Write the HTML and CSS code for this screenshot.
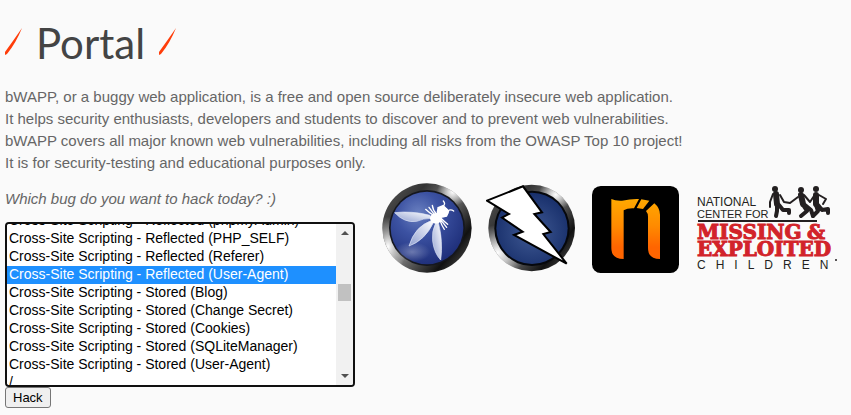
FILE: index.html
```
<!DOCTYPE html>
<html lang="en">
<head>
  <meta charset="UTF-8" />
  <title>bWAPP - Portal</title>
  <link rel="stylesheet" href="styles.css">
</head>
<body>

  <div id="main">
    <h1>
      <svg class="slash" viewBox="0 0 17 27" aria-hidden="true"><path d="M17 0 Q11 15 2 26 L0 27 L0 24 Q8 13 17 0Z" /></svg>
      <span>Portal</span>
      <svg class="slash" viewBox="0 0 17 27" aria-hidden="true"><path d="M17 0 Q11 15 2 26 L0 27 L0 24 Q8 13 17 0Z" /></svg>
    </h1>

    <p class="intro">
      bWAPP, or a buggy web application, is a free and open source deliberately insecure web application.<br>
      It helps security enthusiasts, developers and students to discover and to prevent web vulnerabilities.<br>
      bWAPP covers all major known web vulnerabilities, including all risks from the OWASP Top 10 project!<br>
      It is for security-testing and educational purposes only.
    </p>

    <div class="row">
      <form class="bugs" onsubmit="return false">
        <label for="bug">Which bug do you want to hack today? :)</label>
        <div class="list">
          <select id="bug" name="bug" size="9">
            <option>/ A2 - Broken Auth. &amp; Session Mgmt. /</option>
            <option>Broken Authentication - CAPTCHA Bypassing</option>
            <option>Broken Authentication - Forgotten Function</option>
            <option>Broken Authentication - Insecure Login Forms</option>
            <option>Broken Authentication - Logout Management</option>
            <option>Broken Authentication - Password Attacks</option>
            <option>Broken Authentication - Weak Passwords</option>
            <option>Session Management - Administrative Portals</option>
            <option>Session Management - Cookies (HTTPOnly)</option>
            <option>Session Management - Cookies (Secure)</option>
            <option>Session Management - Session ID in URL</option>
            <option>Session Management - Strong Sessions</option>
            <option>/ A3 - Cross-Site Scripting (XSS) /</option>
            <option>Cross-Site Scripting - Reflected (GET)</option>
            <option>Cross-Site Scripting - Reflected (POST)</option>
            <option>Cross-Site Scripting - Reflected (JSON)</option>
            <option>Cross-Site Scripting - Reflected (AJAX/JSON)</option>
            <option>Cross-Site Scripting - Reflected (AJAX/XML)</option>
            <option>Cross-Site Scripting - Reflected (Back Button)</option>
            <option>Cross-Site Scripting - Reflected (Custom Header)</option>
            <option>Cross-Site Scripting - Reflected (Eval)</option>
            <option>Cross-Site Scripting - Reflected (HREF)</option>
            <option>Cross-Site Scripting - Reflected (phpMyAdmin)</option>
            <option>Cross-Site Scripting - Reflected (PHP_SELF)</option>
            <option>Cross-Site Scripting - Reflected (Referer)</option>
            <option selected>Cross-Site Scripting - Reflected (User-Agent)</option>
            <option>Cross-Site Scripting - Stored (Blog)</option>
            <option>Cross-Site Scripting - Stored (Change Secret)</option>
            <option>Cross-Site Scripting - Stored (Cookies)</option>
            <option>Cross-Site Scripting - Stored (SQLiteManager)</option>
            <option>Cross-Site Scripting - Stored (User-Agent)</option>
            <option>/</option>
            <option>Insecure DOR (Change Secret)</option>
            <option>Insecure DOR (Reset Secret)</option>
            <option>Insecure DOR (Order Tickets)</option>
            <option>/ A5 - Security Misconfiguration /</option>
            <option>Arbitrary File Access (Samba)</option>
            <option>Cross-Domain Policy File (Flash)</option>
            <option>Cross-Origin Resource Sharing (AJAX)</option>
            <option>Cross-Site Tracing (XST)</option>
            <option>Denial-of-Service (Large Chunk Size)</option>
            <option>Denial-of-Service (Slow HTTP DoS)</option>
            <option>Denial-of-Service (SSL-Exhaustion)</option>
            <option>Denial-of-Service (XML Bomb)</option>
            <option>Insecure FTP Configuration</option>
            <option>Insecure SNMP Configuration</option>
            <option>Insecure WebDAV Configuration</option>
            <option>Local Privilege Escalation (sendpage)</option>
            <option>Local Privilege Escalation (udev)</option>
            <option>Man-in-the-Middle Attack (HTTP)</option>
            <option>Man-in-the-Middle Attack (SMTP)</option>
            <option>Old/Backup &amp; Unreferenced Files</option>
            <option>Robots File</option>
            <option>/ A6 - Sensitive Data Exposure /</option>
            <option>Base64 Encoding (Secret)</option>
            <option>BEAST/CRIME/BREACH Attacks</option>
            <option>Clear Text HTTP (Credentials)</option>
            <option>Heartbleed Vulnerability</option>
            <option>Host Header Attack (Reset Poisoning)</option>
            <option>HTML5 Web Storage (Secret)</option>
            <option>POODLE Vulnerability</option>
            <option>SSL 2.0 Deprecated Protocol</option>
            <option>Text Files (Accounts)</option>
            <option>/ A7 - Missing Functional Level Access Control /</option>
            <option>Directory Traversal - Directories</option>
            <option>Directory Traversal - Files</option>
            <option>Server Side Request Forgery (SSRF)</option>
          </select>
          <div class="scrollbar" aria-hidden="true">
            <svg viewBox="0 0 17 17"><path d="M5 11 L9 7 L13 11Z" /></svg>
            <div class="track" id="track"><div class="thumb" id="thumb"></div></div>
            <svg viewBox="0 0 17 17"><path d="M5 6 L9 10 L13 6Z" /></svg>
          </div>
        </div>
        <button type="submit">Hack</button>
      </form>

      <div class="sponsors">
        <!-- OWASP -->
        <a href="#owasp" aria-label="OWASP">
          <svg class="logo" viewBox="22 15 270 270">
            <defs>
              <linearGradient id="rim" x1="0" y1="0.1" x2="1" y2="0.9">
                <stop offset="0" stop-color="#555" />
                <stop offset="0.25" stop-color="#333" />
                <stop offset="0.5" stop-color="#777" />
                <stop offset="0.8" stop-color="#111" />
                <stop offset="1" stop-color="#555" />
              </linearGradient>
              <radialGradient id="shineA"><stop offset="0" stop-color="#fff" /><stop offset="1" stop-color="#fff" stop-opacity="0" /></radialGradient>
              <radialGradient id="ball" cx="0.38" cy="0.3" r="0.75">
                <stop offset="0" stop-color="#6a80c0" />
                <stop offset="0.4" stop-color="#3c52a2" />
                <stop offset="1" stop-color="#1d2d78" />
              </radialGradient>
              <linearGradient id="wing" x1="0" y1="1" x2="1" y2="0">
                <stop offset="0" stop-color="#8f9fd0" />
                <stop offset="1" stop-color="#fff" />
              </linearGradient>
              <clipPath id="disc"><circle cx="157" cy="150" r="134" /></clipPath>
            </defs>
            <circle cx="157" cy="150" r="134" fill="url(#rim)" />
            <g clip-path="url(#disc)">
              <ellipse cx="234" cy="42" rx="48" ry="42" fill="url(#shineA)" />
              <ellipse cx="40" cy="206" rx="55" ry="90" fill="url(#shineA)" />
            </g>
            <circle cx="157" cy="150" r="114" fill="#15171f" />
            <circle cx="157" cy="150" r="109" fill="url(#ball)" />
            <ellipse cx="112" cy="222" rx="55" ry="30" fill="url(#shineA)" opacity="0.3" />
            <g fill="url(#wing)" stroke="#dfe5f6" stroke-width="2">
              <path d="M60 104 Q110 98 166 112 L170 121 Q145 121 126 130 Q90 136 60 104Z" />
              <path d="M172 127 Q120 145 103 204 Q151 187 176 134Z" />
              <path d="M184 133 Q170 160 174 190 Q179 226 198 246 Q206 190 191 133Z" />
            </g>
            <g fill="#fff">
              <ellipse cx="184" cy="121" rx="18" ry="16" />
              <ellipse cx="204" cy="102" rx="18" ry="16" />
              <path d="M188 88 L206 80 L224 99 L217 116 L201 119 L187 108Z" />
            </g>
            <g fill="none" stroke="#fff" stroke-width="4" stroke-linecap="round">
              <path d="M205 85 Q214 78 206 69 M219 99 Q228 92 237 99" />
              <path d="M178 112 Q168 108 153 94 M179 109 L163 88 M185 107 Q175 98 173 82" />
              <path d="M195 124 Q201 143 209 154 M197 124 L216 148 M199 121 Q210 132 219 139" />
            </g>
          </svg>
        </a>

        <!-- OWASP ZAP -->
        <a href="#zap" aria-label="OWASP Zed Attack Proxy">
          <svg class="logo" viewBox="15 15 270 270">
            <defs>
              <radialGradient id="zball" cx="0.5" cy="0.55" r="0.6">
                <stop offset="0" stop-color="#405a94" />
                <stop offset="1" stop-color="#152c68" />
              </radialGradient>
              <clipPath id="zdisc"><circle cx="152" cy="150" r="130" /></clipPath>
            </defs>
            <circle cx="152" cy="150" r="130" fill="url(#rim)" />
            <g clip-path="url(#zdisc)">
              <ellipse cx="224" cy="50" rx="52" ry="46" fill="url(#shineA)" />
              <ellipse cx="50" cy="224" rx="80" ry="84" fill="url(#shineA)" />
            </g>
            <circle cx="153" cy="151" r="113" fill="#05070c" />
            <circle cx="153" cy="151" r="107" fill="url(#zball)" />
            <path d="M18 68 L126 25 L183 103 L160 108 L209 162 L187 168 L257 257 L99 171 L125 161 L63 119 L84 108Z" fill="#fff" stroke="#000" stroke-width="6" />
          </svg>
        </a>

        <!-- Netsparker -->
        <a href="#netsparker" aria-label="Netsparker">
          <svg class="logo" viewBox="15 15 270 270">
            <defs>
              <linearGradient id="flame" gradientUnits="userSpaceOnUse" x1="0" y1="65" x2="0" y2="243">
                <stop offset="0" stop-color="#ffa800" />
                <stop offset="0.45" stop-color="#ff8a00" />
                <stop offset="0.8" stop-color="#ff6500" />
                <stop offset="1" stop-color="#ff6500" />
              </linearGradient>
            </defs>
            <rect x="21" y="24" width="261" height="261" rx="26" />
            <g fill="url(#flame)">
              <path d="M79 63 Q91 69 111 68 Q138 62 162 63 L147 91 Q127 90 116 97 L116 243 Q79 243 79 210Z" />
              <path d="M169 64 L193 68 L174 93 L155 90Z" />
              <path d="M208 76 Q225 90 225 110 L225 243 Q189 243 189 210 L189 116 Q189 106 183 99Z" />
            </g>
          </svg>
        </a>

        <!-- National Center for Missing & Exploited Children -->
        <a href="#ncmec" aria-label="National Center for Missing and Exploited Children">
          <svg class="ncmec" viewBox="-3 0 156 90">
            <g class="sans">
              <text x="0" y="23" font-size="12">NATIONAL</text>
              <text x="0" y="35" font-size="11">CENTER FOR</text>
              <text class="tracked" x="0" y="86" font-size="12">CHILDREN</text>
            </g>
            <rect x="1" y="37" width="119" height="2" fill="#231f20" />
            <g class="slab">
              <text x="0" y="56" font-size="20">MISSING</text>
              <text x="110" y="56" font-size="20">&amp;</text>
              <text x="0" y="73" font-size="20">EXPLOITED</text>
            </g>
            <circle cx="139" cy="77" r="1" fill="#231f20" />
            <g fill="#231f20">
              <circle cx="78" cy="6" r="3" />
              <circle cx="104" cy="7" r="3" />
              <circle cx="119" cy="6" r="3" />
            </g>
            <g fill="none" stroke="#231f20" stroke-linejoin="round" stroke-linecap="round">
              <path d="M79 11 L80 21" stroke-width="6" />
              <path d="M76 11 L73 19 L73 24 M83 12 L87 19 L93 20 L101 14" stroke-width="2" />
              <path d="M80 22 L80 28 L79 33 M82 22 L86 27 L92 27 L92 30" stroke-width="4" />
              <path d="M104 12 L106 21" stroke-width="6" />
              <path d="M107 12 L113 19 L117 13" stroke-width="2" />
              <path d="M106 22 L110 28 L104 33 M108 22 L114 27 L116 33" stroke-width="4" />
              <path d="M119 12 L119 21" stroke-width="6" />
              <path d="M122 12 L129 16 L126 21" stroke-width="2" />
              <path d="M119 22 L121 28 L116 33 M121 22 L125 27 L131 26 L131 30" stroke-width="4" />
            </g>
          </svg>
        </a>
      </div>
    </div>
  </div>

  <script>
    const bug = document.getElementById('bug');
    const track = document.getElementById('track');
    const thumb = document.getElementById('thumb');

    function moveThumb() {
      const ratio = bug.scrollTop / (bug.scrollHeight - bug.clientHeight);
      thumb.style.marginTop = Math.round(ratio * (track.clientHeight - thumb.offsetHeight)) + 'px';
    }

    // open the list a few bugs above the selected one
    const selected = bug.options[bug.selectedIndex];
    bug.scrollTop = selected.offsetHeight * (bug.selectedIndex - 3) + 12;
    bug.addEventListener('scroll', moveThumb);
    moveThumb();
  </script>

</body>
</html>
```
FILE: styles.css
```
body {
  margin: 0;
  background-color: #fafafa;
  font-family: Arial, "Liberation Sans", sans-serif;
  font-size: 15px;
  line-height: 22px;
  color: #666;
}

#main {
  padding: 20px 5px 8px;
}

h1 {
  display: flex;
  align-items: flex-start;
  gap: 14px;
  margin: 0 0 20px;
  font-family: Lato, sans-serif;
  font-size: 42px;
  font-weight: 400;
  line-height: 46px;
  color: #444;
}

.slash {
  width: 17px;
  height: 27px;
  margin-top: 8px;
  fill: #ff3d0a;
}

.intro {
  margin: 0 0 9px;
}

.row {
  display: flex;
  align-items: flex-start;
  gap: 27px;
}

.bugs {
  display: flex;
  flex-direction: column;
  align-items: flex-start;
  width: 350px;
  flex-shrink: 0;
  padding-top: 5px;
}

.bugs label {
  margin-bottom: 12px;
  font-style: italic;
}

.list {
  display: flex;
  box-sizing: border-box;
  width: 100%;
  height: 165px;
  border: 2px solid #101010;
  border-radius: 4px;
  background-color: #fff;
  overflow: hidden;
}

.list select {
  flex: 1;
  min-width: 0;
  height: 100%;
  padding: 0;
  border: none;
  outline: none;
  background-color: #fff;
  font-family: inherit;
  font-size: 14px;
  color: #000;
  scrollbar-width: none;
}

.list option {
  box-sizing: border-box;
  height: 18px;
  padding: 0 2px 1px;
}

.list option:checked {
  background: #1e90ff linear-gradient(#1e90ff, #1e90ff);
  color: #fff;
}

.scrollbar {
  display: flex;
  flex-direction: column;
  width: 17px;
  background-color: #f1f1f1;
}

.scrollbar svg {
  width: 17px;
  height: 17px;
  fill: #505050;
}

.track {
  flex: 1;
}

.thumb {
  width: 13px;
  height: 17px;
  margin: 0 2px;
  background-color: #c1c1c1;
}

.bugs button {
  height: 21px;
  padding: 0 7px;
  border: 1px solid #767676;
  border-radius: 3px;
  background-color: #efefef;
  font-family: inherit;
  font-size: 13px;
  line-height: 18px;
  color: #000;
}

.sponsors {
  display: flex;
  gap: 14px;
}

.sponsors svg {
  display: block;
}

.logo {
  width: 90px;
  height: 90px;
}

.ncmec {
  width: 156px;
  height: 90px;
}

.sans {
  font-family: "Liberation Sans", sans-serif;
  fill: #231f20;
}

.tracked {
  letter-spacing: 10px;
}

.slab {
  font-family: "DejaVu Serif", serif;
  font-weight: bold;
  fill: #d2232a;
  stroke: #d2232a;
  stroke-width: 1px;
}
```
